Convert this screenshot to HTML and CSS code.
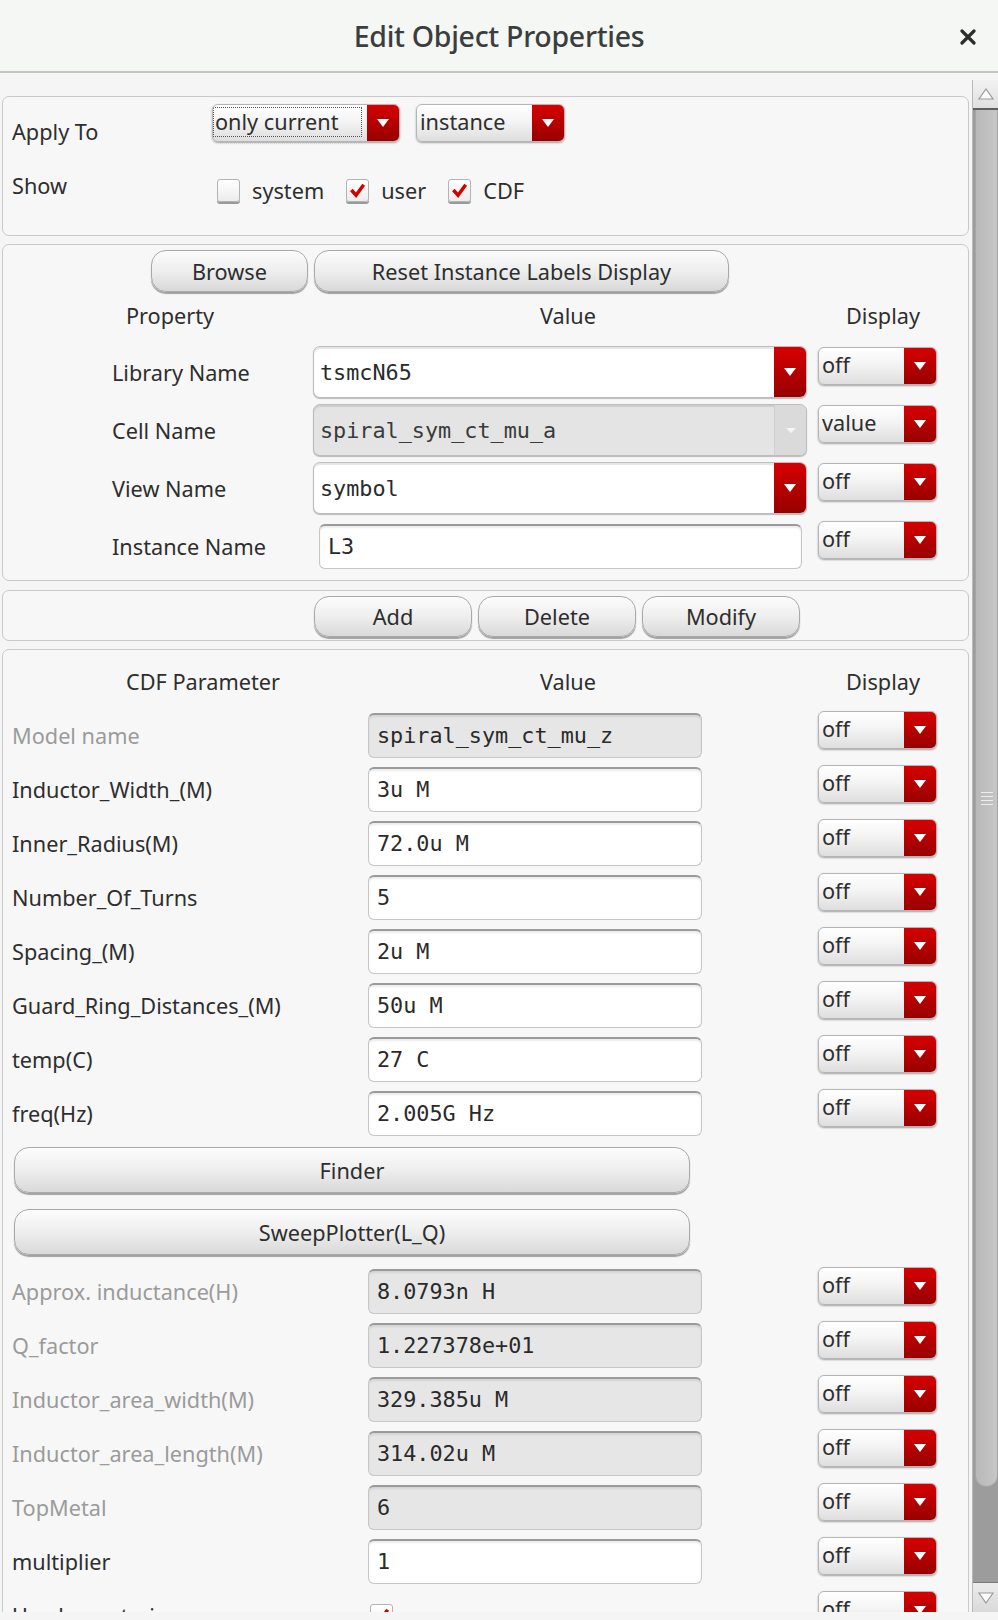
FILE: index.html
```html
<!DOCTYPE html>
<html>
<head>
<meta charset="utf-8">
<link rel="stylesheet" href="styles.css">
</head>
<body>
<div class="window">
  <header class="titlebar">
    <span></span>
    <span class="title">Edit Object Properties</span>
    <span class="close"><svg width="16" height="16" viewBox="0 0 16 16"><path d="M2 2L14 14M14 2L2 14" stroke="#2d2d2d" stroke-width="3.2" stroke-linecap="round"/></svg></span>
  </header>
  <div class="main">
    <div class="scrollview">
      <section class="group g-apply">
        <div class="apply-row">
          <span class="lbl apply-lbl">Apply To</span>
          <div class="combo combo-apply1"><span class="txt"><span class="focus">only current</span></span><span class="arrow"></span></div>
          <div class="combo combo-apply2"><span class="txt">instance</span><span class="arrow"></span></div>
        </div>
        <div class="show-row">
          <span class="lbl show-lbl">Show</span>
          <span class="cb"></span><span class="cb-txt">system</span>
          <span class="cb checked"><svg viewBox="0 0 20 20"><path d="M3.5 9.5L8.5 15L16.5 4" fill="none" stroke="#d30000" stroke-width="3.6"/></svg></span><span class="cb-txt">user</span>
          <span class="cb checked"><svg viewBox="0 0 20 20"><path d="M3.5 9.5L8.5 15L16.5 4" fill="none" stroke="#d30000" stroke-width="3.6"/></svg></span><span class="cb-txt">CDF</span>
        </div>
      </section>

      <section class="group g-prop">
        <div class="btn-row prop-btns">
          <button class="btn btn-browse">Browse</button>
          <button class="btn btn-reset">Reset Instance Labels Display</button>
        </div>
        <div class="hdr hdr-prop">
          <span class="h1">Property</span><span class="h2">Value</span><span class="h3">Display</span>
        </div>
        <div class="prop-row">
          <span class="lbl">Library Name</span>
          <div class="vcombo"><span class="txt mono">tsmcN65</span><span class="arrow"></span></div>
          <div class="combo dcombo"><span class="txt">off</span><span class="arrow"></span></div>
        </div>
        <div class="prop-row">
          <span class="lbl">Cell Name</span>
          <div class="vcombo disabled"><span class="txt mono">spiral_sym_ct_mu_a</span><span class="arrow"></span></div>
          <div class="combo dcombo"><span class="txt">value</span><span class="arrow"></span></div>
        </div>
        <div class="prop-row">
          <span class="lbl">View Name</span>
          <div class="vcombo"><span class="txt mono">symbol</span><span class="arrow"></span></div>
          <div class="combo dcombo"><span class="txt">off</span><span class="arrow"></span></div>
        </div>
        <div class="prop-row">
          <span class="lbl">Instance Name</span>
          <div class="field inst-field mono">L3</div>
          <div class="combo dcombo"><span class="txt">off</span><span class="arrow"></span></div>
        </div>
      </section>

      <section class="group g-actions">
        <div class="btn-row act-btns">
          <button class="btn btn-act">Add</button>
          <button class="btn btn-act">Delete</button>
          <button class="btn btn-act">Modify</button>
        </div>
      </section>

      <section class="group g-cdf">
        <div class="hdr hdr-cdf">
          <span class="h1">CDF Parameter</span><span class="h2">Value</span><span class="h3">Display</span>
        </div>
        <div class="cdf-rows">
          <div class="cdf-row"><span class="lbl dim">Model name</span><div class="field off mono">spiral_sym_ct_mu_z</div><div class="combo dcombo"><span class="txt">off</span><span class="arrow"></span></div></div>
          <div class="cdf-row"><span class="lbl">Inductor_Width_(M)</span><div class="field mono">3u M</div><div class="combo dcombo"><span class="txt">off</span><span class="arrow"></span></div></div>
          <div class="cdf-row"><span class="lbl">Inner_Radius(M)</span><div class="field mono">72.0u M</div><div class="combo dcombo"><span class="txt">off</span><span class="arrow"></span></div></div>
          <div class="cdf-row"><span class="lbl">Number_Of_Turns</span><div class="field mono">5</div><div class="combo dcombo"><span class="txt">off</span><span class="arrow"></span></div></div>
          <div class="cdf-row"><span class="lbl">Spacing_(M)</span><div class="field mono">2u M</div><div class="combo dcombo"><span class="txt">off</span><span class="arrow"></span></div></div>
          <div class="cdf-row"><span class="lbl">Guard_Ring_Distances_(M)</span><div class="field mono">50u M</div><div class="combo dcombo"><span class="txt">off</span><span class="arrow"></span></div></div>
          <div class="cdf-row"><span class="lbl">temp(C)</span><div class="field mono">27 C</div><div class="combo dcombo"><span class="txt">off</span><span class="arrow"></span></div></div>
          <div class="cdf-row"><span class="lbl">freq(Hz)</span><div class="field mono">2.005G Hz</div><div class="combo dcombo"><span class="txt">off</span><span class="arrow"></span></div></div>
        </div>
        <div class="wide-btns">
          <button class="btn btn-wide">Finder</button>
          <button class="btn btn-wide">SweepPlotter(L_Q)</button>
        </div>
        <div class="cdf-rows rows2">
          <div class="cdf-row"><span class="lbl dim">Approx. inductance(H)</span><div class="field off mono">8.0793n H</div><div class="combo dcombo"><span class="txt">off</span><span class="arrow"></span></div></div>
          <div class="cdf-row"><span class="lbl dim">Q_factor</span><div class="field off mono">1.227378e+01</div><div class="combo dcombo"><span class="txt">off</span><span class="arrow"></span></div></div>
          <div class="cdf-row"><span class="lbl dim">Inductor_area_width(M)</span><div class="field off mono">329.385u M</div><div class="combo dcombo"><span class="txt">off</span><span class="arrow"></span></div></div>
          <div class="cdf-row"><span class="lbl dim">Inductor_area_length(M)</span><div class="field off mono">314.02u M</div><div class="combo dcombo"><span class="txt">off</span><span class="arrow"></span></div></div>
          <div class="cdf-row"><span class="lbl dim">TopMetal</span><div class="field off mono">6</div><div class="combo dcombo"><span class="txt">off</span><span class="arrow"></span></div></div>
          <div class="cdf-row"><span class="lbl">multiplier</span><div class="field mono">1</div><div class="combo dcombo"><span class="txt">off</span><span class="arrow"></span></div></div>
          <div class="cdf-row"><span class="lbl">Used_constrain</span><div class="cb-cell"><span class="cb checked"><svg viewBox="0 0 20 20"><path d="M3.5 9.5L8.5 15L16.5 4" fill="none" stroke="#d30000" stroke-width="3.6"/></svg></span></div><div class="combo dcombo"><span class="txt">off</span><span class="arrow"></span></div></div>
        </div>
      </section>
    </div>
    <div class="scrollbar">
      <div class="sb-up"><svg width="18" height="14" viewBox="0 0 18 14"><path d="M9 2L16 12H2Z" fill="#fafafa" stroke="#9a9a9a" stroke-width="1.2"/></svg></div>
      <div class="sb-track">
        <div class="sb-thumb"><span class="grip"></span><span class="grip"></span><span class="grip"></span><span class="grip"></span></div>
      </div>
      <div class="sb-down"><svg width="18" height="14" viewBox="0 0 18 14"><path d="M9 12L16 2H2Z" fill="#fafafa" stroke="#9a9a9a" stroke-width="1.2"/></svg></div>
    </div>
  </div>
</div>
</body>
</html>
```

FILE: styles.css
```css
* { box-sizing: border-box; }
html, body { margin: 0; padding: 0; }
body {
  width: 998px;
  height: 1620px;
  overflow: hidden;
  background: #f5f5f5;
  font-family: "Noto Sans", "Open Sans", sans-serif;
  font-size: 21.7px;
  color: #2e2e2e;
}
.window { width: 998px; height: 1620px; display: flex; flex-direction: column; }

.titlebar {
  height: 73px;
  flex: none;
  background: #f4f7f4;
  border-bottom: 2px solid #c4c4c4;
  display: grid;
  grid-template-columns: 1fr auto 1fr;
  align-items: center;
}
.title { font-size: 28.5px; font-weight: 500; color: #3b3e3d; letter-spacing: -0.3px; }
.close { justify-self: end; margin-right: 22px; display: flex; margin-top: 2px; }

.main { flex: 1; display: flex; padding-top: 7px; padding-bottom: 8px; }
.scrollview { width: 972px; height: 1532px; overflow: hidden; padding-top: 16px; }

.group {
  margin: 0 3px 0 2px;
  border: 1px solid #c9c9c9;
  border-radius: 7px;
  background: #f7f7f7;
}
.g-apply { height: 140px; padding: 7px 0 0 9px; }
.g-prop { margin-top: 8px; height: 337px; padding: 5px 0 0 0; }
.g-actions { margin-top: 9px; height: 51px; padding-top: 5px; }
.g-cdf { margin-top: 8px; padding-top: 16px; height: 1100px; }

.lbl { white-space: nowrap; }
.dim { color: #9b9b9b; }
.mono { font-family: "DejaVu Sans Mono", "Liberation Mono", monospace; font-size: 21.8px; color: #2a2a2a; }

/* Apply row */
.apply-row { display: flex; align-items: flex-start; height: 38px; }
.apply-lbl { width: 200px; margin-top: 13px; }
.combo-apply1 { width: 188px; }
.combo-apply2 { width: 149px; margin-left: 16px; }
.focus { outline: 1px dotted #555; outline-offset: 0; padding: 0 22px 0 1px; margin-left: -2px; line-height: 28px; display: inline-block; }

.show-row { display: flex; align-items: center; height: 30px; margin-top: 33px; }
.show-lbl { width: 205px; margin-top: -10px; }
.cb {
  width: 23px; height: 23px;
  border: 1px solid #b3b3b3;
  border-radius: 3px;
  background: linear-gradient(#ffffff, #ececec);
  box-shadow: 0 2px 0 #9a9a9a;
  display: inline-flex; align-items: center; justify-content: center;
  flex: none;
}
.cb svg { width: 19px; height: 19px; }
.cb-txt { margin-left: 12px; margin-right: 22px; }

/* Combos */
.combo {
  display: flex;
  height: 38px;
  border: 1px solid #b5b5b5;
  border-radius: 6px;
  background: linear-gradient(#ffffff 0%, #f4f4f4 45%, #dedede 100%);
  box-shadow: 0 1px 2px rgba(0,0,0,0.35);
  overflow: hidden;
}
.combo .txt { flex: 1; padding-left: 3px; line-height: 34px; white-space: nowrap; }
.arrow {
  width: 32px; flex: none;
  background: linear-gradient(#d70000, #b00000 60%, #980000);
  display: flex; align-items: center; justify-content: center;
}
.arrow::before {
  content: "";
  border-left: 6px solid transparent;
  border-right: 6px solid transparent;
  border-top: 8px solid #ffffff;
}

/* Buttons */
.btn {
  font-family: "Noto Sans", "Open Sans", sans-serif;
  font-size: 21.7px;
  color: #2e2e2e;
  height: 42px;
  border: 1px solid #a9a9a9;
  border-radius: 15px;
  background: linear-gradient(#fcfcfc 0%, #eeeeee 50%, #d9d9d9 100%);
  box-shadow: 0 2px 1px rgba(0,0,0,0.35);
  padding: 0;
}
.btn-row { display: flex; gap: 6px; }
.prop-btns { padding-left: 148px; }
.btn-browse { width: 157px; }
.btn-reset { width: 415px; }
.act-btns { padding-left: 311px; }
.btn-act { width: 158px; height: 41px; }

/* Headers */
.hdr { display: flex; height: 30px; align-items: center; }
.hdr span { text-align: center; white-space: nowrap; }
.hdr-prop { margin-top: 8px; }
.hdr-prop .h1 { width: 334px; }
.hdr-prop .h2 { width: 462px; }
.hdr-prop .h3 { width: 150px; margin-left: 9px; }
.hdr-cdf .h1 { width: 400px; }
.hdr-cdf .h2 { width: 330px; }
.hdr-cdf .h3 { width: 150px; margin-left: 75px; }

/* Property rows */
.prop-row {
  display: grid;
  grid-template-columns: 201px 494px 130px;
  height: 52px;
  align-items: center;
  padding-left: 109px;
  margin-top: 6px;
}
.hdr-prop + .prop-row { margin-top: 16px; }
.prop-row .dcombo { align-self: start; margin-top: 1px; margin-left: 11px; }
.vcombo {
  display: flex;
  height: 52px;
  border: 1px solid #bdbdbd;
  border-radius: 7px;
  background: #ffffff;
  box-shadow: inset 0 2px 1px rgba(0,0,0,0.10), 0 1px 1px rgba(0,0,0,0.25);
  overflow: hidden;
}
.vcombo .txt { flex: 1; padding-left: 6px; line-height: 52px; }
.vcombo .arrow { width: 32px; }
.vcombo.disabled { background: #e4e4e4; }
.vcombo.disabled .arrow { background: #dadada; border-left: 1px solid #cfcfcf; }
.vcombo.disabled .arrow::before { border-top-color: #f5f5f5; border-left-width: 5px; border-right-width: 5px; border-top-width: 5px; }
.vcombo.disabled .txt { color: #3a3a3a; }

.field {
  height: 45px;
  background: #ffffff;
  border: 1px solid #c6c6c6;
  border-top: 2px solid #9a9a9a;
  border-radius: 6px;
  box-shadow: inset 0 2px 2px rgba(0,0,0,0.08);
  padding-left: 8px;
  line-height: 41px;
  white-space: nowrap;
  overflow: hidden;
}
.field.off { background: #e6e6e6; }
.inst-field { margin: 0 5px 0 6px; }

/* CDF rows */
.cdf-rows { display: flex; flex-direction: column; gap: 9px; margin-top: 17px; }
.cdf-row {
  display: grid;
  grid-template-columns: 356px 334px 235px;
  height: 45px;
  align-items: center;
  padding-left: 9px;
}
.cdf-row .dcombo { align-self: start; margin-top: -2px; margin-left: 116px; }
.cb-cell { display: flex; align-items: center; padding-left: 2px; }

.wide-btns { display: flex; flex-direction: column; gap: 16px; padding-left: 11px; margin-top: 11px; }
.btn-wide { width: 676px; height: 46px; }
.rows2 { margin-top: 14px; }

/* Scrollbar */
.scrollbar {
  width: 26px;
  height: 1532px;
  display: flex;
  flex-direction: column;
  border-left: 1px solid #b9b9b9;
  background: #9c9c9c;
}
.sb-up {
  height: 30px;
  background: linear-gradient(#f2f2f2, #e0e0e0);
  border-bottom: 2px solid #5f5f5f;
  display: flex; align-items: center; justify-content: center;
}
.sb-track { flex: 1; display: flex; flex-direction: column; background: #9c9c9c; }
.sb-thumb {
  height: 1377px;
  margin-left: 2px;
  background: linear-gradient(90deg, #b9b9b9, #c6c6c6);
  border: 1px solid #a5a5a5;
  border-top: none;
  border-radius: 0 0 11px 11px;
  display: flex; flex-direction: column; align-items: center; justify-content: center; gap: 3px;
}
.grip { width: 12px; height: 1px; background: #eeeeee; }
.sb-down {
  height: 30px;
  background: linear-gradient(#ececec, #d9d9d9);
  border-top: 1px solid #7a7a7a;
  display: flex; align-items: center; justify-content: center;
}
```
